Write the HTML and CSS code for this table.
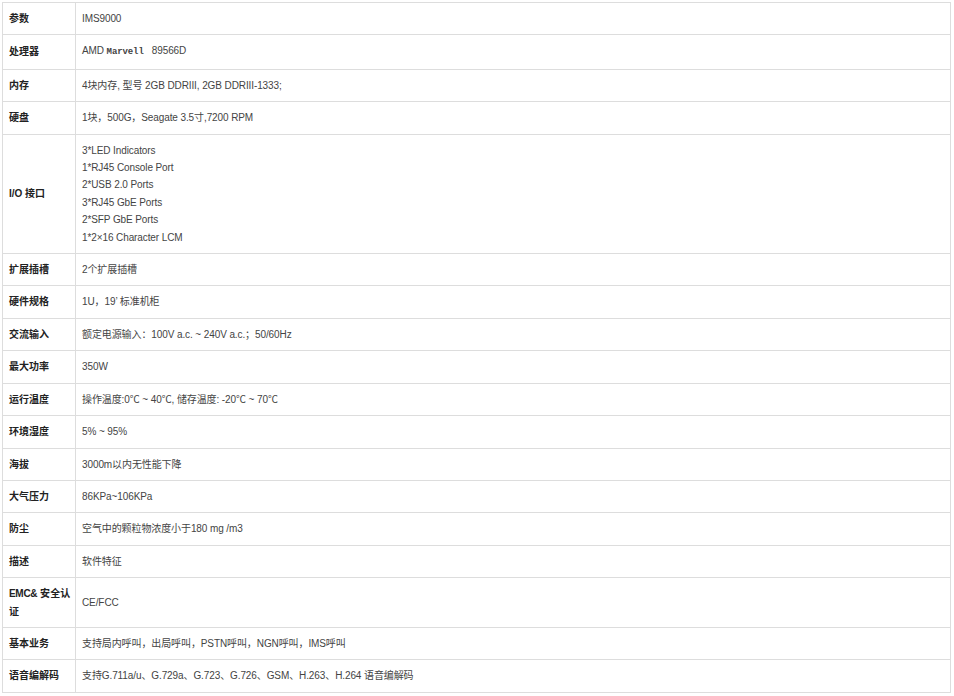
FILE: index.html
```html
<!DOCTYPE html>
<html lang="zh-CN">
<head>
    <meta charset="UTF-8">
    <meta name="viewport" content="width=device-width, initial-scale=1.0">
    <title>IMS9000 参数</title>
    <link rel="stylesheet" href="styles.css">
</head>
<body>
    <table class="spec-table">
        <tr><th>参数</th><td>IMS9000</td></tr>
        <tr><th>处理器</th><td>AMD <span class="mono">Marvell</span>&nbsp;&nbsp; 89566D</td></tr>
        <tr><th>内存</th><td>4块内存, 型号 2GB DDRIII, 2GB DDRIII-1333;</td></tr>
        <tr><th>硬盘</th><td>1块，500G，Seagate 3.5寸,7200 RPM</td></tr>
        <tr>
            <th>I/O 接口</th>
            <td>3*LED Indicators<br>1*RJ45 Console Port<br>2*USB 2.0 Ports<br>3*RJ45 GbE Ports<br>2*SFP GbE Ports<br>1*2×16 Character LCM</td>
        </tr>
        <tr><th>扩展插槽</th><td>2个扩展插槽</td></tr>
        <tr><th>硬件规格</th><td>1U，19’ 标准机柜</td></tr>
        <tr><th>交流输入</th><td>额定电源输入：100V a.c. ~ 240V a.c.；50/60Hz</td></tr>
        <tr><th>最大功率</th><td>350W</td></tr>
        <tr><th>运行温度</th><td>操作温度:0℃ ~ 40℃, 储存温度: -20℃ ~ 70℃</td></tr>
        <tr><th>环境湿度</th><td>5% ~ 95%</td></tr>
        <tr><th>海拔</th><td>3000m以内无性能下降</td></tr>
        <tr><th>大气压力</th><td>86KPa~106KPa</td></tr>
        <tr><th>防尘</th><td>空气中的颗粒物浓度小于180 mg /m3</td></tr>
        <tr><th>描述</th><td>软件特征</td></tr>
        <tr><th class="tight">EMC&amp; 安全认证</th><td>CE/FCC</td></tr>
        <tr><th>基本业务</th><td>支持局内呼叫，出局呼叫，PSTN呼叫，NGN呼叫，IMS呼叫</td></tr>
        <tr><th>语音编解码</th><td>支持G.711a/u、G.729a、G.723、G.726、GSM、H.263、H.264 语音编解码</td></tr>
    </table>
</body>
</html>
```

FILE: styles.css
```css
body {
    margin: 2px;
    background-color: #fff;
    font-family: Tahoma, "Liberation Sans", "Noto Sans CJK SC", sans-serif;
    font-size: 10px;
    color: #333;
}
.spec-table {
    width: 949px;
    border-collapse: collapse;
    table-layout: fixed;
}
.spec-table th,
.spec-table td {
    border: 1px solid #ddd;
    padding: 7px 6px 7px;
    line-height: 17.4px;
    text-align: left;
    vertical-align: middle;
}
.spec-table th {
    width: 61px;
    padding-right: 5px;
    font-weight: bold;
    color: #222;
    text-align: justify;
}
.spec-table th.tight {
    letter-spacing: -0.3px;
}
.spec-table td {
    color: #444;
    letter-spacing: -0.1px;
}
.mono {
    font-family: "Liberation Mono", monospace;
    font-weight: bold;
    font-size: 9px;
}
```
